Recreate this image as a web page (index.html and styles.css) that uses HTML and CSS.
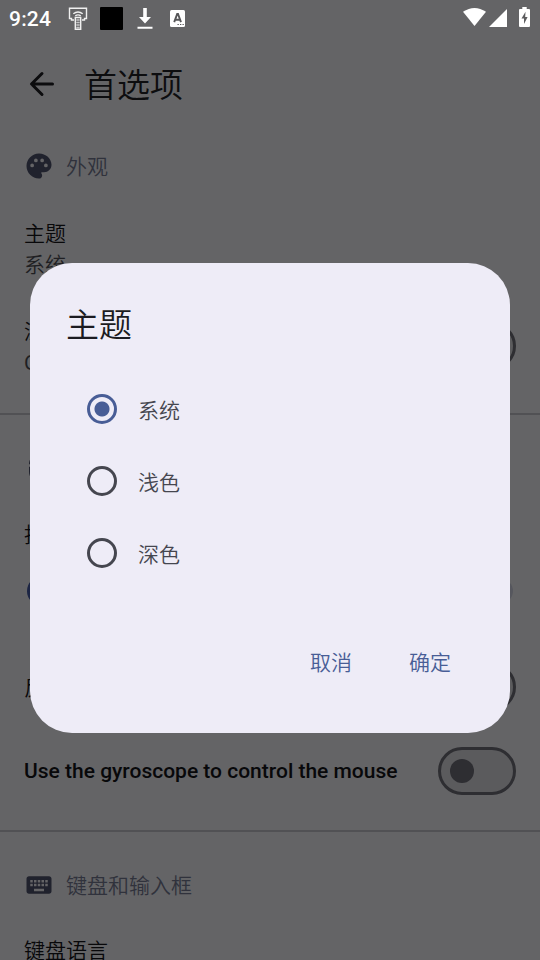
FILE: index.html
```html
<!DOCTYPE html>
<html lang="zh-CN">
<head>
<meta charset="utf-8">
<title>首选项</title>
<link rel="stylesheet" href="styles.css">
</head>
<body>
<div class="screen">
  <header class="status">
    <span class="clock">9:24</span>
    <svg class="ic-remote" width="20" height="24" viewBox="0 0 20 24" fill="none" stroke="#f0f0f0" stroke-width="1.400"><path d="M6 13H3.500V11.500H1.500V1.200h17v10.300h-2V13H14"/><path d="M5.300 6.800q4.700-3.600 9.400 0M7.300 8.900q2.700-2 5.400 0"/><path d="M7.300 10.500h5.400V22.300H7.300z"/><path d="M8.500 13h3M8.500 15.500h3M8.500 18h3M8.500 20.500h3" stroke-dasharray="1.200 .6"/></svg>
    <span class="block"></span>
    <svg class="ic-down" width="16" height="22" viewBox="0 0 16 22" fill="#fff"><path d="M6.200 0h3.600v9H14l-6 6.500L2 9h4.200zM.5 18.800h15v2H.5z"/></svg>
    <svg class="ic-a" width="15" height="17" viewBox="0 0 15 17"><rect width="15" height="17" rx="1.500" fill="#fff"/><path d="M4.200 12.200 7.200 4h.8l3 8.200M5.400 9.700h4.400" fill="none" stroke="#555557" stroke-width="1.900"/><path d="M7.500 14.500h1.300M10 14.500h1.300M12.500 14.500h1.300" stroke="#555557" stroke-width="1.200"/></svg>
    <span class="grow"></span>
    <svg class="ic-wifi" width="23" height="18" viewBox="0 0 23 18" fill="#fff"><path d="M0 3.800Q11.500-3.800 23 3.800L11.500 18z"/></svg>
    <svg class="ic-cell" width="18" height="18" viewBox="0 0 18 18" fill="#fff"><path d="M18 0v18H0z"/></svg>
    <svg class="ic-batt" width="11" height="20" viewBox="0 0 11 20"><path d="M3.300 0h4.400v2H10q1 0 1 1v16q0 1-1 1H1q-1 0-1-1V3q0-1 1-1h2.300z" fill="#fff"/><path d="M6.500 4.800 2.500 11.500H5V17l3.600-7H6.200z" fill="#5c5c5e"/></svg>
  </header>
  <div class="appbar">
    <svg width="36" height="36" viewBox="0 0 24 24" fill="none" stroke="#0c0c0e" stroke-width="2" stroke-linecap="round" stroke-linejoin="round"><path d="M19 12H5.200M12 5l-7 7 7 7"/></svg>
    <h1>首选项</h1>
  </div>
  <main>
    <section class="appearance">
      <div class="head">
        <svg width="30" height="30" viewBox="0 0 24 24" fill="#20222d"><path d="M12 2C6.490 2 2 6.490 2 12s4.490 10 10 10c1.380 0 2.500-1.120 2.500-2.500 0-.61-.23-1.200-.64-1.670-.08-.1-.13-.21-.13-.33 0-.28.22-.5.5-.5H16c3.310 0 6-2.690 6-6 0-4.960-4.490-9-10-9zM6.500 13a1.500 1.500 0 1 1 0-3 1.500 1.500 0 0 1 0 3zm3-4a1.500 1.500 0 1 1 0-3 1.500 1.500 0 0 1 0 3zm5 0a1.500 1.500 0 1 1 0-3 1.500 1.500 0 0 1 0 3zm3 4a1.500 1.500 0 1 1 0-3 1.500 1.500 0 0 1 0 3z"/></svg>
        <h2>外观</h2>
      </div>
      <div class="item"><div><p>主题</p><p class="sub">系统</p></div></div>
      <div class="item two"><div><p>深色</p><p class="sub latin">OLED</p></div><span class="switch"></span></div>
    </section>
    <section class="mouse">
      <div class="head">
        <svg width="30" height="30" viewBox="0 0 24 24" fill="#20222d"><path d="M13 1.070V9h7c0-4.080-3.050-7.440-7-7.930zM4 15c0 4.420 3.580 8 8 8s8-3.580 8-8v-4H4zM11 1.070C7.050 1.560 4 4.920 4 9h7z"/></svg>
        <h2>鼠标</h2>
      </div>
      <div class="item speed"><p>指针速度</p></div>
      <div class="slider"><span class="thumb"></span><span class="track"></span></div>
      <div class="item invert"><p>反转滚动</p><span class="switch"></span></div>
      <div class="item gyro"><p>Use the gyroscope to control the mouse</p><span class="switch"></span></div>
    </section>
    <section>
      <div class="head keys">
        <svg width="30" height="30" viewBox="0 0 24 24" fill="#20222d"><path fill-rule="evenodd" d="M20 5H4c-1.100 0-1.990.9-1.990 2L2 17c0 1.100.9 2 2 2h16c1.100 0 2-.9 2-2V7c0-1.100-.9-2-2-2zm-9 3h2v2h-2V8zm0 3h2v2h-2v-2zM8 8h2v2H8V8zm0 3h2v2H8v-2zm-1 2H5v-2h2v2zm0-3H5V8h2v2zm9 7H8v-2h8v2zm0-4h-2v-2h2v2zm0-3h-2V8h2v2zm3 3h-2v-2h2v2zm0-3h-2V8h2v2z"/></svg>
        <h2>键盘和输入框</h2>
      </div>
      <div class="item language"><p>键盘语言</p></div>
    </section>
  </main>
  <div class="dialog" role="dialog">
    <h3>主题</h3>
    <div class="options">
      <div class="option"><span class="radio checked"></span>系统</div>
      <div class="option"><span class="radio"></span>浅色</div>
      <div class="option"><span class="radio"></span>深色</div>
    </div>
    <div class="actions"><span>取消</span><span>确定</span></div>
  </div>
</div>
</body>
</html>
```
FILE: styles.css
```css
* { box-sizing: border-box; margin: 0; padding: 0; }
body { font-family: Roboto, "Noto Sans CJK SC", sans-serif; font-weight: 350; }
h1, h2, h3 { font-weight: 350; }
svg { display: block; flex: none; }
.screen { position: relative; width: 540px; height: 960px; overflow: hidden; background: #646466; }
.status { display: flex; height: 36px; padding: 0 10px 0 9px; align-items: flex-start; }
.clock { width: 59px; font-size: 21px; font-weight: 500; line-height: 36px; color: #fff; letter-spacing: .2px; white-space: nowrap; padding-top: 1px; }
.ic-remote { margin-top: 7px; }
.block { width: 23px; height: 23px; margin: 7px 0 0 12px; border-radius: 1px; background: #000; }
.ic-down { margin: 8px 0 0 14px; }
.ic-a { margin: 10px 0 0 17px; }
.grow { flex: 1; }
.ic-wifi { margin-top: 8px; }
.ic-cell { margin: 9px 0 0 3px; }
.ic-batt { margin: 7px 0 0 12px; }
.appbar { display: flex; height: 96px; align-items: center; padding-left: 24px; gap: 24px; }
.appbar h1 { padding-top: 4px; font-size: 33px; line-height: 48px; color: #0d0d0f; }
.head { display: flex; height: 68px; align-items: center; padding-left: 24px; gap: 12px; }
.head h2 { padding-top: 2px; font-size: 21px; line-height: 30px; color: #30323c; }
.item { display: flex; align-items: center; justify-content: space-between; padding: 0 24px; }
.item p { font-size: 21px; line-height: 31px; color: #08080a; white-space: nowrap; }
.item p.sub { color: #1f1f23; }
.item p.latin { font-weight: 400; }
.appearance { height: 283px; border-bottom: 2px solid #515154; }
.appearance .item { height: 97px; }
.appearance .item div { padding-top: 3px; }
.appearance .two { height: 98px; }
.appearance .two div { padding-top: 4px; }
.switch { display: flex; align-items: center; flex: none; width: 78px; height: 48px; padding-left: 9px; border: 3px solid #2e2e32; border-radius: 24px; background: #5b5b5d; }
.switch::before { content: ""; width: 24px; height: 24px; border-radius: 50%; background: #2e2e32; }
.mouse { height: 417px; padding-top: 19px; border-bottom: 2px solid #515154; }
.speed { height: 65px; padding-top: 1px; }
.slider { display: flex; height: 48px; align-items: center; padding: 0 27px; }
.thumb { width: 30px; height: 30px; border-radius: 50%; background: #1c2544; }
.track { flex: 1; height: 24px; border-radius: 0 12px 12px 0; background: #56575e; }
.invert { height: 144px; }
.invert p { padding-top: 3px; }
.gyro { height: 24px; }
.gyro p { font-weight: 500; }
.keys { height: 104px; padding-top: 2px; }
.language { height: 31px; }
.dialog { position: absolute; left: 30px; top: 263px; width: 480px; height: 470px; border-radius: 42px; background: #eeecf7; padding: 38px 36px 0; }
.dialog h3 { font-size: 33px; line-height: 50px; color: #1b1b21; }
.options { padding: 22px 0 0 21px; }
.option { display: flex; height: 72px; align-items: center; gap: 21px; font-size: 21px; color: #45464f; }
.radio { display: flex; width: 30px; height: 30px; border: 3px solid #45464f; border-radius: 50%; align-items: center; justify-content: center; }
.radio.checked { border-color: #485d96; background: radial-gradient(circle, #485d96 7px, transparent 8px); }
.actions { display: flex; justify-content: flex-end; gap: 57px; padding: 59px 23px 0 0; font-size: 21px; line-height: 30px; color: #485d96; }
```
